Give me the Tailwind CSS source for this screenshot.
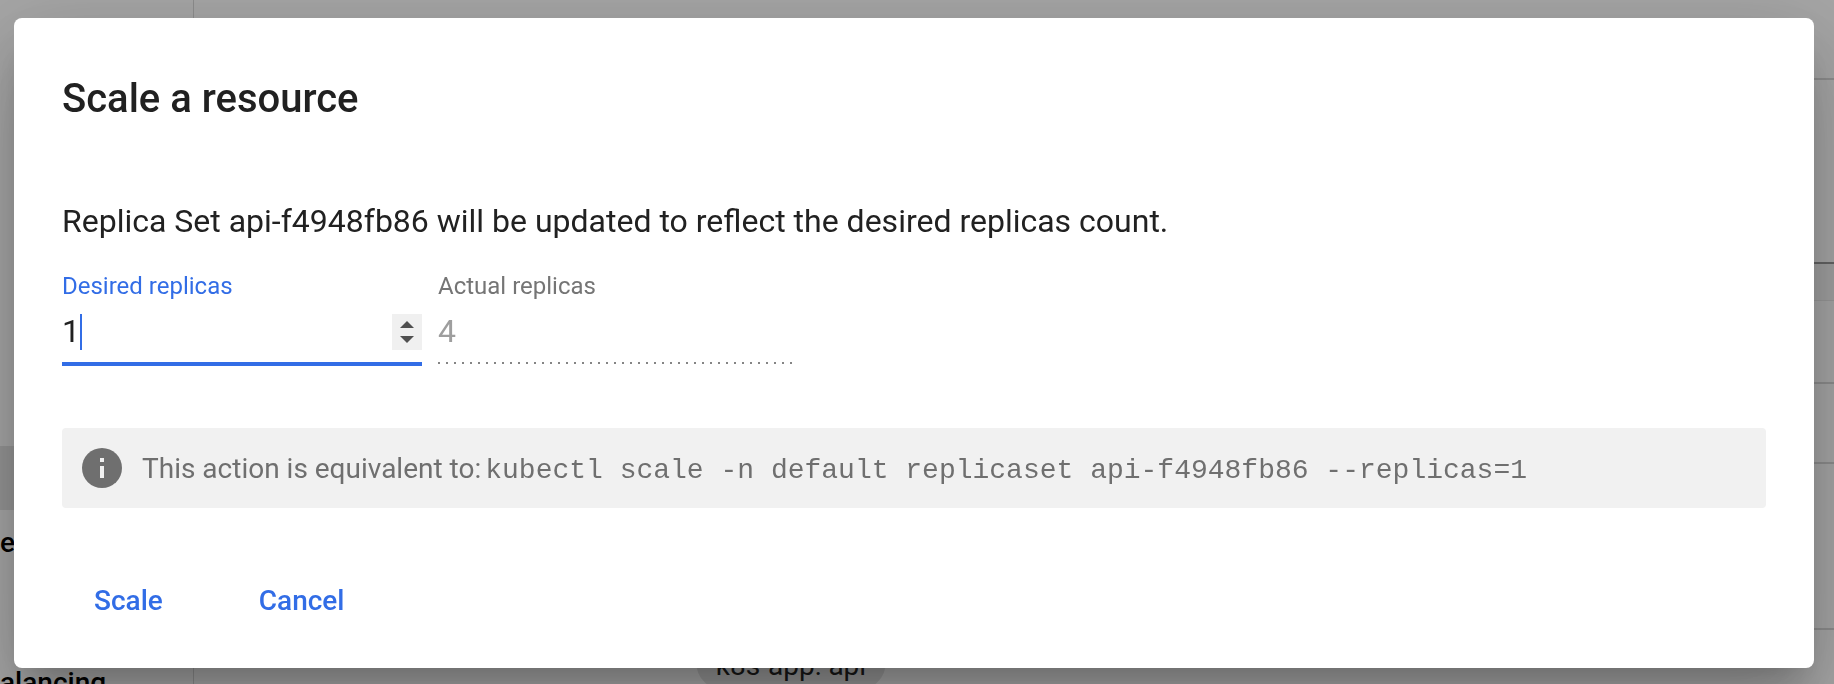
<!DOCTYPE html>
<html lang="en">
<head>
<meta charset="utf-8">
<title>Scale a resource</title>
<script src="https://cdn.jsdelivr.net/npm/@tailwindcss/browser@4"></script>
</head>
<body class="h-screen overflow-hidden bg-[#f5f5f5] font-[Roboto,sans-serif] text-[#212121]">
<div class="flex h-screen overflow-hidden" aria-hidden="true">
  <nav class="w-[194px] shrink-0 border-r border-black/15 text-[28px] leading-8 font-medium text-black">
    <div class="h-[446px]"></div>
    <div class="h-16 bg-black/10"></div>
    <div class="pt-[17px]">er</div>
    <div class="pt-[108px]">alancing</div>
  </nav>
  <main class="flex min-w-0 grow flex-col">
    <div class="h-20 shrink-0 border-b-2 border-black/15"></div>
    <div class="h-[184px] shrink-0 border-b-2 border-black/40"></div>
    <div class="h-[37px] shrink-0 border-b border-black/5 bg-black/3"></div>
    <div class="h-[83px] shrink-0 border-b-2 border-black/15"></div>
    <div class="h-20 shrink-0 border-b-2 border-black/15"></div>
    <div class="h-[166px] shrink-0 border-b-2 border-black/15"></div>
    <div class="shrink-0 pt-1 pl-[502px]">
      <span class="inline-block w-[190px] rounded-full bg-black/10 pt-4 pb-2 text-center text-[28px] leading-8">k8s-app: api</span>
    </div>
  </main>
</div>

<div class="fixed inset-0 flex items-start bg-black/32 pt-[18px] pr-5 pl-[14px]">
  <form role="dialog" aria-labelledby="dialog-title" class="w-full rounded-lg bg-white px-12 pt-[49px] pb-8 shadow-[0_22px_30px_-14px_rgba(0,0,0,0.2),0_48px_76px_6px_rgba(0,0,0,0.14),0_18px_92px_16px_rgba(0,0,0,0.12)]">
    <h1 id="dialog-title" class="text-[40px] leading-16 font-medium">Scale a resource</h1>
    <p class="mt-[66px] text-[32px] leading-12">Replica Set api-f4948fb86 will be updated to reflect the desired replicas count.</p>

    <div class="mt-[25px] flex gap-4">
      <div class="w-[360px] border-b-4 border-[#326de6] pb-3">
        <label for="desired" class="block text-2xl leading-8 text-[#326de6]">Desired replicas</label>
        <div class="relative mt-3 flex h-9 items-center">
          <input id="desired" type="number" value="1" class="h-9 min-w-0 grow appearance-none bg-transparent pb-[2px] text-[32px] leading-[34px] caret-transparent outline-none [appearance:textfield]">
          <span class="absolute top-0 left-[18px] h-9 w-[2px] bg-[#326de6]"></span>
          <div class="flex h-9 w-[30px] shrink-0 flex-col bg-[#f0f0f0]">
            <button type="button" aria-label="Increase" class="flex h-[18px] items-end justify-center pb-1">
              <svg class="h-[7px] w-[14px]" viewBox="0 0 14 7" fill="#505050"><path d="M0 7L7 0L14 7Z"/></svg>
            </button>
            <button type="button" aria-label="Decrease" class="flex h-[18px] items-start justify-center pt-1">
              <svg class="h-[7px] w-[14px]" viewBox="0 0 14 7" fill="#505050"><path d="M0 0L7 7L14 0Z"/></svg>
            </button>
          </div>
        </div>
      </div>
      <div class="w-[360px]">
        <label for="actual" class="block text-2xl leading-8 text-[#757575]">Actual replicas</label>
        <input id="actual" type="text" value="4" disabled class="mt-3 block h-9 w-full bg-transparent pb-[2px] text-[32px] leading-[34px] text-[#9e9e9e]">
        <div class="mt-3 h-[2px] w-[356px] bg-[repeating-linear-gradient(to_right,#858585_0,#858585_2px,transparent_2px,transparent_8px)]"></div>
      </div>
    </div>

    <div class="mt-[62px] flex h-20 items-center rounded bg-[#f1f1f1] px-5 text-[28px] leading-9 text-[#6f6f6f]">
      <svg class="mr-5 size-10 shrink-0" viewBox="0 0 40 40"><circle cx="20" cy="20" r="20" fill="#6f6f6f"/><path d="M18 10h4v4h-4zM18 18h4v12h-4z" fill="#f1f1f1"/></svg>
      <p class="flex items-baseline gap-1 pt-1">
        <span>This action is equivalent to:</span>
        <code class="whitespace-nowrap font-['Courier_New','Liberation_Mono',monospace]">kubectl scale -n default replicaset api-f4948fb86 --replicas=1</code>
      </p>
    </div>

    <div class="mt-[57px] -mb-px flex gap-8 text-[28px] leading-[72px] font-medium text-[#326de6]">
      <button type="submit" class="px-8">Scale</button>
      <button type="button" class="px-8">Cancel</button>
    </div>
  </form>
</div>
</body>
</html>
